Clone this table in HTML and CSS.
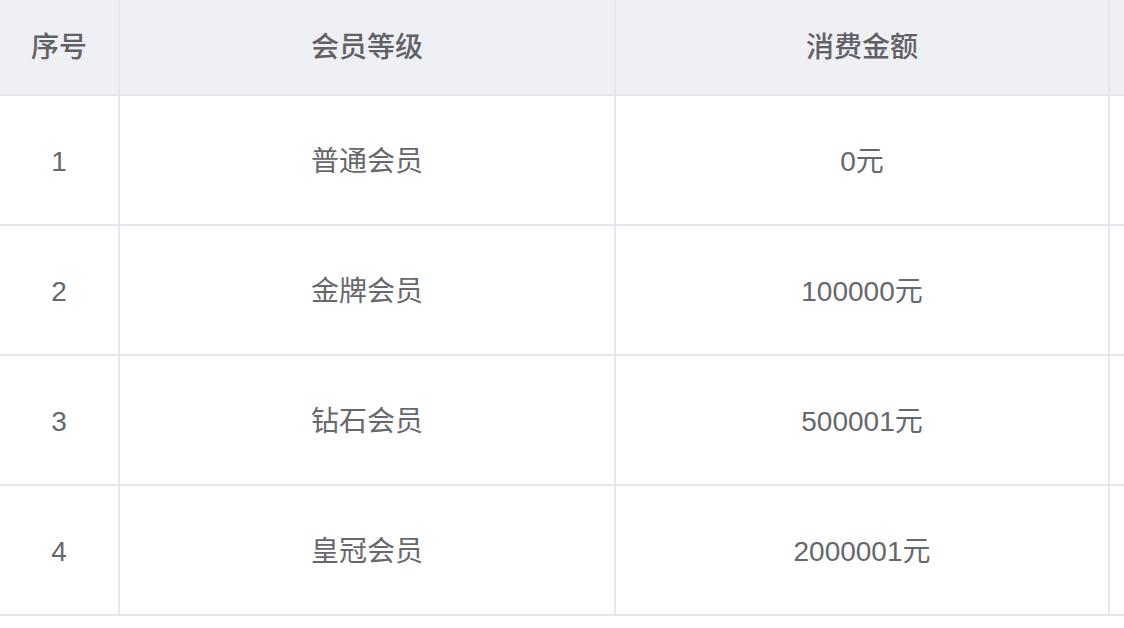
FILE: index.html
```html
<!DOCTYPE html>
<html lang="zh">
<head>
<meta charset="utf-8">
<title>会员等级</title>
<link rel="stylesheet" href="styles.css">
</head>
<body>
<div class="table-wrap">
<table class="grade-table">
  <colgroup>
    <col class="c-idx">
    <col class="c-name">
    <col class="c-amount">
    <col class="c-more">
  </colgroup>
  <thead>
    <tr>
      <th>序号</th>
      <th>会员等级</th>
      <th>消费金额</th>
      <th></th>
    </tr>
  </thead>
  <tbody>
    <tr><td>1</td><td>普通会员</td><td>0元</td><td></td></tr>
    <tr><td>2</td><td>金牌会员</td><td>100000元</td><td></td></tr>
    <tr><td>3</td><td>钻石会员</td><td>500001元</td><td></td></tr>
    <tr><td>4</td><td>皇冠会员</td><td>2000001元</td><td></td></tr>
  </tbody>
</table>
</div>
</body>
</html>
```

FILE: styles.css
```css
html, body {
  margin: 0;
  padding: 0;
  background: #ffffff;
}

body {
  font-family: "Liberation Sans", "Noto Sans CJK SC", sans-serif;
  color: #606266;
}

.table-wrap {
  width: 100%;
  overflow: hidden;
}

.grade-table {
  border-collapse: separate;
  border-spacing: 0;
  table-layout: fixed;
  width: 1400px;
}

.c-idx { width: 120px; }
.c-name { width: 496px; }
.c-amount { width: 494px; }
.c-more { width: 290px; }

.grade-table th,
.grade-table td {
  padding: 0;
  text-align: center;
  vertical-align: middle;
  border-right: 2px solid #e4e7ed;
  border-bottom: 2px solid #e4e7ed;
  font-size: 28px;
  line-height: 1;
}

.grade-table th {
  height: 92px;
  background: #eff0f4;
  color: #606266;
  font-weight: 500;
  padding-top: 2px;
}

.grade-table td {
  height: 125px;
  color: #66686c;
  font-weight: 400;
  padding-top: 3px;
}
```
